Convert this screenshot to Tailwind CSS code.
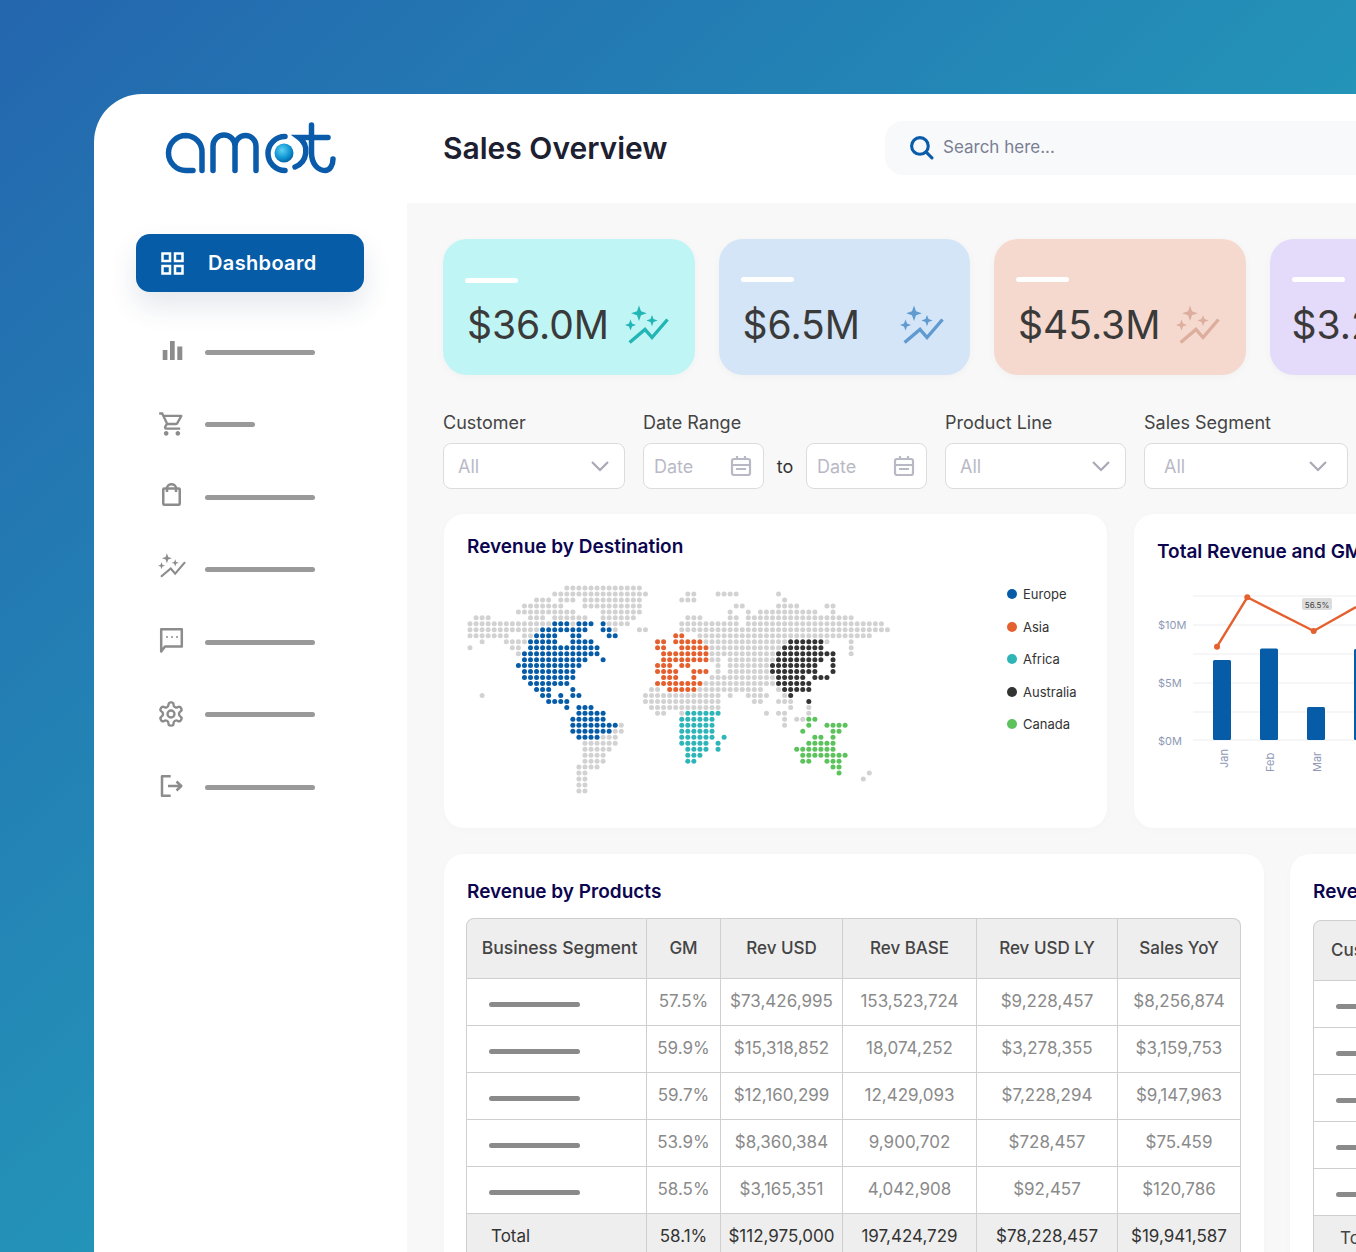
<!DOCTYPE html>
<html lang="en">
<head>
<meta charset="UTF-8" />
<meta name="viewport" content="width=device-width, initial-scale=1.0" />
<title>Sales Overview</title>
<script src="https://cdn.jsdelivr.net/npm/@tailwindcss/browser@4"></script>
</head>
<body class="w-[1356px] h-[1252px] overflow-hidden pt-[94px] pl-[94px] bg-gradient-to-br from-[#2466ae] to-[#2499b9] to-60% font-['Inter',sans-serif]">
<svg class="hidden">
  <symbol id="spark" viewBox="0 0 44 40">
    <path fill="currentColor" d="M14 1.500l2 5.800 5.800 2-5.800 2-2 5.800-2-5.800-5.800-2 5.800-2z"/>
    <path fill="currentColor" d="M27 11l1.500 4.100 4.100 1.500-4.100 1.500-1.500 4.100-1.500-4.100-4.100-1.500 4.100-1.500z"/>
    <path fill="currentColor" d="M5.500 15.500l1.500 4 4 1.500-4 1.500-1.500 4-1.500-4-4-1.500 4-1.500z"/>
    <path fill="none" stroke="currentColor" stroke-width="3.400" d="M4.600 38.500L20 25.500l7 8 15.500-18"/>
  </symbol>
</svg>
<div class="flex h-[1158px] bg-white rounded-tl-[48px] overflow-hidden">
  <!-- Sidebar -->
  <aside class="w-[313px] shrink-0 pl-[42px] pr-[43px]">
    <svg class="mt-[26px] ml-[27px] block" width="176" height="56" viewBox="163 120 176 56" fill="none" stroke="#0a5cab" stroke-width="5.500" stroke-linecap="round">
      <path d="M193 170.500H186A17.500 17.500 0 0 1 186 135.500A16.500 16.500 0 0 1 202 152.500V170.500"/>
      <path d="M213 170.500V146A11 11 0 0 1 235 146V170.500M235 146A10.500 10.500 0 0 1 256 146V170.500"/>
      <path d="M285 136.500A17 17 0 0 0 285 170.500"/>
      <path d="M295 167A17 17 0 0 0 299 137.500H328"/>
      <path d="M311.500 125V153C311.500 165 319 170.500 325 170.500C330 170.500 333 165 333 159"/>
      <defs><radialGradient id="ball" cx="0.4" cy="0.35" r="0.7"><stop offset="0" stop-color="#5fd0f2"/><stop offset="0.6" stop-color="#0e96d4"/><stop offset="1" stop-color="#075c9e"/></radialGradient></defs>
      <circle cx="284" cy="153" r="9.500" fill="url(#ball)" stroke="none"/>
    </svg>
    <div class="mt-[58px] h-[58px] flex items-center gap-[24px] pl-[25px] bg-[#075ca8] rounded-[14px] shadow-[0_14px_28px_rgba(30,60,100,0.12)] text-white">
      <svg width="23" height="23" viewBox="0 0 23 23" fill="none" stroke="#fff" stroke-width="2.500"><rect x="1.500" y="1.500" width="7.500" height="7.500"/><rect x="14" y="1.500" width="7.500" height="7.500"/><rect x="1.500" y="14" width="7.500" height="7.500"/><rect x="14" y="14" width="7.500" height="7.500"/></svg>
      <span class="text-[20px] font-semibold tracking-[0.35px]">Dashboard</span>
    </div>
    <nav class="mt-[24px] text-[#8c8c8c]">
      <div class="h-[72.500px] flex items-center gap-[19px] pl-[22px]">
        <svg class="w-[28px] h-[28px] -mt-[4px]" viewBox="0 0 28 28" fill="currentColor"><rect x="4.700" y="14" width="4.700" height="10"/><rect x="12" y="5" width="4.700" height="19"/><rect x="19.300" y="10.500" width="5" height="13.500"/></svg>
        <div class="w-[110px] h-[5px] rounded-full bg-[#999]"></div>
      </div>
      <div class="h-[72.500px] flex items-center gap-[19px] pl-[22px]">
        <svg class="w-[28px] h-[28px] -mt-[2px]" viewBox="0 0 24 24" fill="currentColor"><path d="M15.550 13c.750 0 1.410-.410 1.750-1.030l3.580-6.490c.370-.660-.110-1.480-.870-1.480H5.210l-.940-2H1v2h2l3.600 7.590-1.350 2.440C4.520 15.370 5.480 17 7 17h12v-2H7l1.100-2h7.450zM6.160 6h12.150l-2.760 5H8.530L6.160 6zM7 18c-1.100 0-1.990.900-1.990 2S5.900 22 7 22s2-.900 2-2-.900-2-2-2zm10 0c-1.100 0-1.990.900-1.990 2s.890 2 1.990 2 2-.900 2-2-.900-2-2-2z"/></svg>
        <div class="w-[50px] h-[5px] rounded-full bg-[#999]"></div>
      </div>
      <div class="h-[72.500px] flex items-center gap-[19px] pl-[22px]">
        <svg class="w-[28px] h-[28px]" viewBox="0 0 28 28" fill="none" stroke="currentColor" stroke-width="2.500" stroke-linejoin="round"><rect x="5.250" y="5.500" width="16.500" height="16.200" rx="1"/><path d="M9 9V5.200A4.500 4 0 0 1 18 5.200V9"/></svg>
        <div class="w-[110px] h-[5px] rounded-full bg-[#999]"></div>
      </div>
      <div class="h-[72.500px] flex items-center gap-[19px] pl-[22px]">
        <svg class="w-[28px] h-[26px] -mt-[9px]"><use href="#spark"/></svg>
        <div class="w-[110px] h-[5px] rounded-full bg-[#999]"></div>
      </div>
      <div class="h-[72.500px] flex items-center gap-[19px] pl-[22px]">
        <svg class="w-[28px] h-[28px]" viewBox="0 0 28 28" fill="none" stroke="currentColor" stroke-width="2.500" stroke-linejoin="round"><path d="M3.200 1.200H23.800V18.500H7L3.200 23.500z"/><circle cx="9" cy="9" r="1" fill="currentColor" stroke="none"/><circle cx="14" cy="9" r="1" fill="currentColor" stroke="none"/><circle cx="19" cy="9" r="1" fill="currentColor" stroke="none"/></svg>
        <div class="w-[110px] h-[5px] rounded-full bg-[#999]"></div>
      </div>
      <div class="h-[72.500px] flex items-center gap-[19px] pl-[22px]">
        <svg class="w-[28px] h-[28px] -mt-[2px] -ml-[1px] mr-[1px]" viewBox="0 0 24 24" fill="none" stroke="currentColor" stroke-width="2"><path d="M12.220 2h-.440a2 2 0 0 0-2 2v.180a2 2 0 0 1-1 1.730l-.430.250a2 2 0 0 1-2 0l-.150-.080a2 2 0 0 0-2.730.730l-.220.380a2 2 0 0 0 .730 2.730l.150.100a2 2 0 0 1 1 1.720v.510a2 2 0 0 1-1 1.740l-.150.090a2 2 0 0 0-.730 2.730l.220.380a2 2 0 0 0 2.730.730l.150-.080a2 2 0 0 1 2 0l.430.250a2 2 0 0 1 1 1.730V20a2 2 0 0 0 2 2h.440a2 2 0 0 0 2-2v-.180a2 2 0 0 1 1-1.730l.430-.250a2 2 0 0 1 2 0l.150.080a2 2 0 0 0 2.730-.730l.220-.390a2 2 0 0 0-.730-2.730l-.150-.080a2 2 0 0 1-1-1.740v-.500a2 2 0 0 1 1-1.740l.150-.090a2 2 0 0 0 .730-2.730l-.220-.380a2 2 0 0 0-2.730-.730l-.150.080a2 2 0 0 1-2 0l-.430-.250a2 2 0 0 1-1-1.730V4a2 2 0 0 0-2-2z"/><circle cx="12" cy="12" r="3"/></svg>
        <div class="w-[110px] h-[5px] rounded-full bg-[#999]"></div>
      </div>
      <div class="h-[72.500px] flex items-center gap-[19px] pl-[22px]">
        <svg class="w-[28px] h-[28px]" viewBox="0 0 28 28" fill="none" stroke="currentColor" stroke-width="2.500" stroke-linejoin="round"><path d="M12.700 3.200H4V22.700H12.700"/><path d="M10 13H23M18.500 8.500L23.300 13L18.500 17.500"/></svg>
        <div class="w-[110px] h-[5px] rounded-full bg-[#999]"></div>
      </div>
    </nav>
  </aside>

  <div class="flex-1 min-w-0 overflow-hidden flex flex-col">
    <!-- Header -->
    <header class="h-[109px] shrink-0 flex items-center pl-[36px] bg-white">
      <h1 class="w-[442px] shrink-0 text-[30px] leading-none font-semibold text-[#1c2030] -mt-[2px]">Sales Overview</h1>
      <div class="w-[600px] shrink-0 h-[54px] mt-[-2px] bg-[#f8f9fa] rounded-[18px] flex items-center pl-[24px] gap-[9px]">
        <svg width="25" height="25" viewBox="0 0 24 24" fill="none" stroke="#0a5cab" stroke-width="3" stroke-linecap="round"><circle cx="10.500" cy="10.500" r="8"/><path d="M16.500 16.500L22 22"/></svg>
        <span class="text-[17px] text-[#7a7f94]">Search here...</span>
      </div>
    </header>

    <!-- Main content -->
    <main class="flex-1 bg-[#f8f8f8] pl-[36px] pt-[36px]">
      <div class="flex gap-[24px] w-[1100px]">
        <div class="w-[251.500px] h-[136px] shrink-0 rounded-[24px] bg-[#c0f5f5] shadow-[0_2px_8px_rgba(0,0,0,0.03)] px-[22px] pt-[39px] text-[#22b5b5]">
          <div class="w-[53px] h-[5px] rounded-full bg-white"></div>
          <div class="mt-[20px] flex items-center justify-between pl-[2px] pr-[4px]">
            <span class="text-[39px] leading-none text-[#3a3a3a] mt-[2px]">$36.0M</span>
            <svg class="w-[44px] h-[40px]"><use href="#spark"/></svg>
          </div>
        </div>
        <div class="w-[251.500px] h-[136px] shrink-0 rounded-[24px] bg-[#d3e5f7] shadow-[0_2px_8px_rgba(0,0,0,0.03)] px-[22px] pt-[38px] text-[#5f9ad0]">
          <div class="w-[53px] h-[5px] rounded-full bg-white"></div>
          <div class="mt-[21px] flex items-center justify-between pl-[2px] pr-[4px]">
            <span class="text-[39px] leading-none text-[#3a3a3a] mt-[2px]">$6.5M</span>
            <svg class="w-[44px] h-[40px]"><use href="#spark"/></svg>
          </div>
        </div>
        <div class="w-[251.500px] h-[136px] shrink-0 rounded-[24px] bg-[#f6d9ce] shadow-[0_2px_8px_rgba(0,0,0,0.03)] px-[22px] pt-[38px] text-[#dcae9e]">
          <div class="w-[53px] h-[5px] rounded-full bg-white"></div>
          <div class="mt-[21px] flex items-center justify-between pl-[2px] pr-[4px]">
            <span class="text-[39px] leading-none text-[#3a3a3a] mt-[2px]">$45.3M</span>
            <svg class="w-[44px] h-[40px]"><use href="#spark"/></svg>
          </div>
        </div>
        <div class="w-[251.500px] h-[136px] shrink-0 rounded-[24px] bg-[#e4dafa] shadow-[0_2px_8px_rgba(0,0,0,0.03)] px-[22px] pt-[38px]">
          <div class="w-[53px] h-[5px] rounded-full bg-white"></div>
          <div class="mt-[23px]">
            <span class="text-[39px] leading-none text-[#3a3a3a]">$3.2M</span>
          </div>
        </div>
      </div>

      <!-- Filters -->
      <div class="mt-[36px] flex gap-[18px] w-[1000px] text-[18px] text-[#444]">
        <div class="w-[182px] shrink-0">
          <div class="h-[24px] leading-[24px]">Customer</div>
          <div class="mt-[8px] h-[46px] bg-white border border-[#dcdcdc] rounded-[8px] flex items-center justify-between pl-[14px] pr-[14px] text-[#b9b9c6]">All
            <svg width="20" height="12" viewBox="0 0 20 12" fill="none" stroke="#a9a9b6" stroke-width="2.200"><path d="M2 2l8 8 8-8"/></svg>
          </div>
        </div>
        <div class="shrink-0">
          <div class="h-[24px] leading-[24px]">Date Range</div>
          <div class="mt-[8px] flex items-center">
            <div class="w-[121px] h-[46px] bg-white border border-[#dcdcdc] rounded-[8px] flex items-center justify-between pl-[10px] pr-[11px] text-[#b9b9c6]">Date
              <svg width="22" height="22" viewBox="0 0 22 22" fill="none" stroke="#b9b9c6" stroke-width="2.200"><rect x="2" y="4" width="18" height="16" rx="2"/><path d="M2 10h18M7 1v4M15 1v4M6 14h10"/></svg>
            </div>
            <span class="w-[42px] text-center text-[#333]">to</span>
            <div class="w-[121px] h-[46px] bg-white border border-[#dcdcdc] rounded-[8px] flex items-center justify-between pl-[10px] pr-[11px] text-[#b9b9c6]">Date
              <svg width="22" height="22" viewBox="0 0 22 22" fill="none" stroke="#b9b9c6" stroke-width="2.200"><rect x="2" y="4" width="18" height="16" rx="2"/><path d="M2 10h18M7 1v4M15 1v4M6 14h10"/></svg>
            </div>
          </div>
        </div>
        <div class="w-[181px] shrink-0">
          <div class="h-[24px] leading-[24px]">Product Line</div>
          <div class="mt-[8px] h-[46px] bg-white border border-[#dcdcdc] rounded-[8px] flex items-center justify-between pl-[14px] pr-[14px] text-[#b9b9c6]">All
            <svg width="20" height="12" viewBox="0 0 20 12" fill="none" stroke="#a9a9b6" stroke-width="2.200"><path d="M2 2l8 8 8-8"/></svg>
          </div>
        </div>
        <div class="w-[204px] shrink-0">
          <div class="h-[24px] leading-[24px]">Sales Segment</div>
          <div class="mt-[8px] h-[46px] bg-white border border-[#dcdcdc] rounded-[8px] flex items-center justify-between pl-[19px] pr-[19px] text-[#b9b9c6]">All
            <svg width="20" height="12" viewBox="0 0 20 12" fill="none" stroke="#a9a9b6" stroke-width="2.200"><path d="M2 2l8 8 8-8"/></svg>
          </div>
        </div>
      </div>

      <!-- Charts row -->
      <div class="mt-[25px] flex gap-[27px] w-[1000px]">
        <section class="w-[663px] h-[314px] shrink-0 ml-px bg-white rounded-[20px] shadow-[0_2px_8px_rgba(0,0,0,0.02)] pl-[23px] pt-[21px]">
          <h2 class="text-[19px] leading-[24px] font-semibold text-[#0b0550]">Revenue by Destination</h2>
          <div class="flex mt-[26px]">
            <svg id="worldmap" class="shrink-0" width="540" height="215" viewBox="467 585 540 215"></svg>
            <ul class="w-[90px] pt-[1px] text-[13px] leading-[16px] text-[#333] space-y-[16.500px]">
              <li class="flex items-center gap-[6px]"><span class="w-[10px] h-[10px] rounded-full bg-[#075ca8]"></span>Europe</li>
              <li class="flex items-center gap-[6px]"><span class="w-[10px] h-[10px] rounded-full bg-[#e4602e]"></span>Asia</li>
              <li class="flex items-center gap-[6px]"><span class="w-[10px] h-[10px] rounded-full bg-[#2fb5b8]"></span>Africa</li>
              <li class="flex items-center gap-[6px]"><span class="w-[10px] h-[10px] rounded-full bg-[#333]"></span>Australia</li>
              <li class="flex items-center gap-[6px]"><span class="w-[10px] h-[10px] rounded-full bg-[#5cc25c]"></span>Canada</li>
            </ul>
          </div>
        </section>
        <section class="w-[400px] h-[314px] shrink-0 bg-white rounded-[20px] shadow-[0_2px_8px_rgba(0,0,0,0.02)] pl-[24px] pt-[26px]">
          <h2 class="-ml-px text-[19px] leading-[24px] font-semibold text-[#0b0550] whitespace-nowrap">Total Revenue and GM</h2>
          <svg class="mt-[20px] -ml-[24px] block" width="222" height="210" viewBox="1134 584 222 210" font-family="Inter, sans-serif" font-size="11" fill="#8e9ab5">
            <g stroke="#f3f4f6" stroke-width="1.500"><path d="M1193 596H1356M1193 625H1356M1193 654H1356M1193 683H1356M1193 712H1356M1193 740H1356"/></g>
            <text x="1158" y="629">$10M</text>
            <text x="1158" y="687">$5M</text>
            <text x="1158" y="745">$0M</text>
            <g fill="#075ca8">
              <rect x="1213" y="660" width="18" height="80" rx="1.500"/>
              <rect x="1260" y="648.500" width="18" height="91.500" rx="1.500"/>
              <rect x="1307" y="707" width="18" height="33" rx="1.500"/>
              <rect x="1354" y="649" width="18" height="91" rx="1.500"/>
            </g>
            <path d="M1217 646.700L1247.300 597.300L1313.700 631L1356 607" fill="none" stroke="#e4602e" stroke-width="2.400"/>
            <g fill="#e4602e"><circle cx="1217" cy="646.700" r="3"/><circle cx="1247.300" cy="597.300" r="3"/><circle cx="1313.700" cy="631" r="3"/></g>
            <rect x="1302" y="598" width="30" height="12" rx="2" fill="#dcdcdc"/>
            <text x="1317" y="607.500" text-anchor="middle" font-size="8" fill="#444">56.5%</text>
            <text transform="translate(1228 768) rotate(-90)">Jan</text>
            <text transform="translate(1274 772) rotate(-90)">Feb</text>
            <text transform="translate(1321 772) rotate(-90)">Mar</text>
          </svg>
        </section>
      </div>

      <!-- Tables row -->
      <div class="mt-[26px] flex gap-[26px] w-[1000px]">
        <section class="w-[820px] shrink-0 ml-px h-[500px] bg-white rounded-t-[20px] shadow-[0_2px_8px_rgba(0,0,0,0.02)] pl-[22px] pt-[26px]">
          <h2 class="text-[19px] leading-[24px] font-semibold text-[#0b0550] ml-px">Revenue by Products</h2>
          <table class="mt-[14px] w-[775px] table-fixed border-separate border-spacing-0 text-[17px] text-[#8a8a8a] text-center [&_td]:h-[47px] [&_td]:border-b [&_td]:border-r [&_td]:border-[#cfcfcf] [&_th]:border-[#cfcfcf]">
            <colgroup><col class="w-[181px]"/><col class="w-[74px]"/><col class="w-[122px]"/><col class="w-[134px]"/><col class="w-[141px]"/><col class="w-[123px]"/></colgroup>
            <thead class="bg-[#eeeeee] text-[#444] text-[17px]">
              <tr class="h-[61px]">
                <th class="font-medium border rounded-tl-[8px] whitespace-nowrap text-[17.600px] pl-[6px]">Business Segment</th>
                <th class="font-medium border-y border-r">GM</th>
                <th class="font-medium border-y border-r">Rev USD</th>
                <th class="font-medium border-y border-r">Rev BASE</th>
                <th class="font-medium border-y border-r">Rev USD LY</th>
                <th class="font-medium border-y border-r rounded-tr-[8px]">Sales YoY</th>
              </tr>
            </thead>
            <tbody>
              <tr><td class="border-l"><div class="ml-[22px] w-[91px] h-[5px] mt-[4px] rounded-full bg-[#8a8a8a]"></div></td><td>57.5%</td><td>$73,426,995</td><td>153,523,724</td><td>$9,228,457</td><td>$8,256,874</td></tr>
              <tr><td class="border-l"><div class="ml-[22px] w-[91px] h-[5px] mt-[4px] rounded-full bg-[#8a8a8a]"></div></td><td>59.9%</td><td>$15,318,852</td><td>18,074,252</td><td>$3,278,355</td><td>$3,159,753</td></tr>
              <tr><td class="border-l"><div class="ml-[22px] w-[91px] h-[5px] mt-[4px] rounded-full bg-[#8a8a8a]"></div></td><td>59.7%</td><td>$12,160,299</td><td>12,429,093</td><td>$7,228,294</td><td>$9,147,963</td></tr>
              <tr><td class="border-l"><div class="ml-[22px] w-[91px] h-[5px] mt-[4px] rounded-full bg-[#8a8a8a]"></div></td><td>53.9%</td><td>$8,360,384</td><td>9,900,702</td><td>$728,457</td><td>$75.459</td></tr>
              <tr><td class="border-l"><div class="ml-[22px] w-[91px] h-[5px] mt-[4px] rounded-full bg-[#8a8a8a]"></div></td><td>58.5%</td><td>$3,165,351</td><td>4,042,908</td><td>$92,457</td><td>$120,786</td></tr>
              <tr class="bg-[#eeeeee] text-[#333]"><td class="border-l text-left pl-[24px]">Total</td><td>58.1%</td><td>$112,975,000</td><td>197,424,729</td><td>$78,228,457</td><td>$19,941,587</td></tr>
            </tbody>
          </table>
        </section>
        <section class="w-[300px] shrink-0 h-[500px] bg-white rounded-t-[20px] shadow-[0_2px_8px_rgba(0,0,0,0.02)] pl-[23px] pt-[26px]">
          <h2 class="text-[19px] leading-[24px] font-semibold text-[#0b0550]">Revenue by Customers</h2>
          <table class="mt-[16px] w-[300px] table-fixed border-separate border-spacing-0 text-[17px] text-[#444] [&_td]:h-[47px] [&_td]:border-b [&_td]:border-r [&_td]:border-[#cfcfcf]">
            <thead class="bg-[#eeeeee]">
              <tr class="h-[61px]"><th class="font-medium text-left pl-[17px] border border-[#cfcfcf] rounded-tl-[8px]">Customer</th></tr>
            </thead>
            <tbody>
              <tr><td class="border-l"><div class="ml-[22px] w-[91px] h-[5px] mt-[4px] rounded-full bg-[#8a8a8a]"></div></td></tr>
              <tr><td class="border-l"><div class="ml-[22px] w-[91px] h-[5px] mt-[4px] rounded-full bg-[#8a8a8a]"></div></td></tr>
              <tr><td class="border-l"><div class="ml-[22px] w-[91px] h-[5px] mt-[4px] rounded-full bg-[#8a8a8a]"></div></td></tr>
              <tr><td class="border-l"><div class="ml-[22px] w-[91px] h-[5px] mt-[4px] rounded-full bg-[#8a8a8a]"></div></td></tr>
              <tr><td class="border-l"><div class="ml-[22px] w-[91px] h-[5px] mt-[4px] rounded-full bg-[#8a8a8a]"></div></td></tr>
              <tr class="bg-[#eeeeee]"><td class="border-l pl-[26px]">Total</td></tr>
            </tbody>
          </table>
        </section>
      </div>
    </main>
  </div>
</div>
<script>
// map dots: each row is a list of [colour key, from col, to col], later entries paint over earlier
var colours = { g: '#d2d2d2', b: '#075ca8', o: '#e4602e', t: '#2fb5b8', k: '#333333', n: '#5cc25c' };
var rows = [
  'g16-28',
  'g14-29 g36-37 g41-44 g51',
  'g11-13 g15-17 g19-28 g35-37 g52',
  'g9-15 g19-28 g44-45 g51-54 g59-60',
  'g8-17 g22-28 g43 g46 g48-57 g60',
  'g1-3 g10-12 g14-19 g22-27 g36-38 g43-44 g46-63',
  'g0-13 b14-16 g17 b18-20 b22 g23-26 g35-44 g46-68',
  'g0-11 b12-19 b22-23 g24 g28-29 g35-69',
  'g0-5 g6 g9-10 b11-14 b17-18 b23-24 o34-35 g38-66',
  'g2 g6-9 b10-14 b17-20 o31-32 o34-38 g39-52 k53-58 g59 g63',
  'g0 g7-8 b10-21 o31-32 o35-39 g40-51 k52-58 g63',
  'g8 b9-21 o32-39 g40-50 k51-60 g63',
  'b9-19 b22 o32-39 g40-41 g43-50 k51-58 k60',
  'b8-18 o31-33 o35-36 g41 g43-49 k50-57 k60',
  'b9-17 o31-34 o37-39 g41 g43-49 k50-57 k60',
  'b9-17 o32-34 o37 g40-50 k51-55 k57-59',
  'b10-16 o31-38 g39-50 k51-56',
  'b11-13 b17 g30-31 o33-37 g38-48 g51 k52-56',
  'g2 b12-13 b15 b17-18 g29-41 g43 g46-49 g52 k53',
  'b13-16 g29-41 g47-48 g51-53 k56',
  'b16 b18-20 g30-41 g53 g56',
  'b18-22 g31-32 g35 t36-41 g49 g51-52 g56',
  'b17-22 t35-40 g52 g54-55 n56-57',
  'b17-24 g25 t35-40 g52 n56 n59-62',
  'b17-23 g24-25 t35-40 n55 n60-61',
  'b18-21 g22-24 t35-40 t42 n57-58 n60',
  'g19-24 t35-39 t41 n56-60',
  'g19-23 t36-39 t41 n54-59 n60',
  'g19-22 t36-38 n55-62',
  'g19-22 t36-37 n55-56 n59-61',
  'g18-21 n60-61',
  'g18-19 n61 g66',
  'g18-19 g65',
  'g18-19',
  'g18-19'
];
var dots = '';
rows.forEach(function (row, r) {
  row.split(' ').forEach(function (span) {
    var parts = span.slice(1).split('-');
    var from = +parts[0], to = +(parts[1] || parts[0]);
    for (var c = from; c <= to; c++) {
      dots += '<circle cx="' + (470 + 6.05 * c) + '" cy="' + (588 + 5.97 * r) + '" r="2.500" fill="' + colours[span[0]] + '"/>';
    }
  });
});
document.getElementById('worldmap').innerHTML = dots;
</script>
</body>
</html>
